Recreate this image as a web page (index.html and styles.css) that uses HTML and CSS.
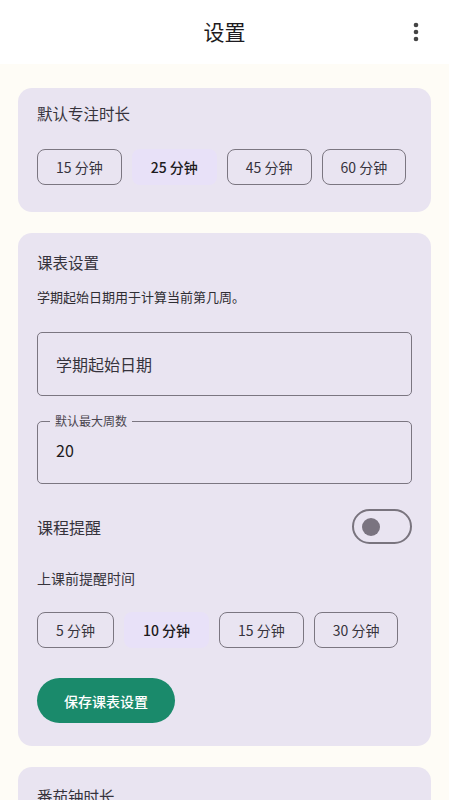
FILE: index.html
```html
<!DOCTYPE html>
<html lang="zh">
<head>
    <meta charset="UTF-8">
    <meta name="viewport" content="width=device-width, initial-scale=1.0">
    <title>设置</title>
    <link rel="stylesheet" href="styles.css">
</head>
<body>
    <div id="topBar">
        <div class="title">设置</div>
        <div class="menu">
            <svg width="6" height="20" viewBox="0 0 6 20">
                <circle cx="3" cy="3" r="2.3" fill="#444"/>
                <circle cx="3" cy="10" r="2.3" fill="#444"/>
                <circle cx="3" cy="17" r="2.3" fill="#444"/>
            </svg>
        </div>
    </div>

    <div id="content">
        <div class="card card-focus">
            <div class="card-title">默认专注时长</div>
            <div class="chips">
                <div class="chip">15 分钟</div>
                <div class="chip selected">25 分钟</div>
                <div class="chip">45 分钟</div>
                <div class="chip">60 分钟</div>
            </div>
        </div>

        <div class="card">
            <div class="card-title">课表设置</div>
            <div class="desc">学期起始日期用于计算当前第几周。</div>

            <div class="field">学期起始日期</div>

            <fieldset class="field field-label">
                <legend>默认最大周数</legend>
                <div class="value">20</div>
            </fieldset>

            <div class="switch-row">
                <div class="switch-label">课程提醒</div>
                <div class="switch"><span class="knob"></span></div>
            </div>

            <div class="sub-title">上课前提醒时间</div>
            <div class="chips">
                <div class="chip">5 分钟</div>
                <div class="chip selected">10 分钟</div>
                <div class="chip">15 分钟</div>
                <div class="chip">30 分钟</div>
            </div>

            <div class="save-btn">保存课表设置</div>
        </div>

        <div class="card">
            <div class="card-title">番茄钟时长</div>
        </div>
    </div>
</body>
</html>
```

FILE: styles.css
```css
body {
    margin: 0;
    font-family: "Noto Sans CJK SC", "Noto Sans", Roboto, sans-serif;
    background-color: #fefcf6;
    color: #1d1b20;
    height: 800px;
    overflow: hidden;
}

#topBar {
    position: relative;
    height: 64px;
    background-color: #ffffff;
    display: flex;
    align-items: center;
    justify-content: center;
}

#topBar .title {
    font-size: 21px;
    color: #1d1b20;
    margin-top: -3px;
}

#topBar .menu {
    position: absolute;
    right: 30px;
    top: 22px;
}

#content {
    padding: 24px 18px 0 18px;
    display: flex;
    flex-direction: column;
    gap: 21px;
}

.card {
    background-color: #e9e4f1;
    border-radius: 14px;
    padding: 19px 19px 23px 19px;
    display: flex;
    flex-direction: column;
}

.card-focus {
    padding-top: 15px;
    padding-bottom: 27px;
}

.card-title {
    font-size: 15.5px;
    line-height: 20px;
    color: #36333c;
}

.card-focus .card-title {
    margin-bottom: 26px;
}

.desc {
    font-size: 13px;
    line-height: 18px;
    color: #2f2d33;
    margin-top: 16px;
    margin-bottom: 26px;
}

.chips {
    display: flex;
    gap: 10px;
}

.chip {
    flex: none;
    white-space: nowrap;
    height: 36px;
    box-sizing: border-box;
    padding: 0 18px;
    border: 1.5px solid #7b7681;
    border-radius: 8px;
    display: flex;
    align-items: center;
    justify-content: center;
    font-size: 14px;
    color: #36333c;
}

.chip.selected {
    border-color: transparent;
    background-color: #e8e1f8;
    color: #1d1b20;
    font-weight: 500;
}

.field {
    height: 64px;
    box-sizing: border-box;
    border: 1.5px solid #7b7681;
    border-radius: 5px;
    padding: 0 18px;
    display: flex;
    align-items: center;
    font-size: 16px;
    color: #36333c;
    margin: 0;
}

.field-label {
    display: block;
    margin-top: 19px;
    height: 69px;
    padding: 0 18px 0 18px;
    min-width: 0;
}

.field-label legend {
    font-size: 12px;
    line-height: 12px;
    color: #49454f;
    padding: 0 5px;
    margin-left: -6px;
}

.field-label .value {
    font-size: 16px;
    color: #1d1b20;
    margin-top: 12px;
    line-height: 22px;
}

.switch-row {
    display: flex;
    justify-content: space-between;
    align-items: center;
    margin-top: 25px;
}

.switch-label {
    font-size: 16px;
    color: #36333c;
}

.switch {
    width: 60px;
    height: 35px;
    box-sizing: border-box;
    border: 2px solid #79747e;
    border-radius: 18px;
    display: flex;
    align-items: center;
    padding-left: 8px;
}

.knob {
    width: 18px;
    height: 18px;
    border-radius: 50%;
    background-color: #7a7480;
}

.sub-title {
    font-size: 14px;
    line-height: 20px;
    color: #36333c;
    margin-top: 24px;
    margin-bottom: 24px;
}

.save-btn {
    align-self: flex-start;
    margin-top: 30px;
    width: 138px;
    height: 45px;
    border-radius: 23px;
    background-color: #1a8a6b;
    color: #ffffff;
    font-size: 14px;
    font-weight: 500;
    display: flex;
    align-items: center;
    justify-content: center;
}
```
